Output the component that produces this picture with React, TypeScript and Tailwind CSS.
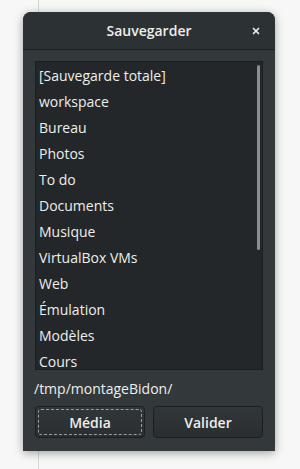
import { X } from "lucide-react";

const items = [
  "[Sauvegarde totale]",
  "workspace",
  "Bureau",
  "Photos",
  "To do",
  "Documents",
  "Musique",
  "VirtualBox VMs",
  "Web",
  "Émulation",
  "Modèles",
  "Cours",
];

const App = () => {
  return (
    <div
      className="relative w-[300px] h-[469px] overflow-hidden bg-[#f7f7f7] pt-[12px] pl-[23px]"
      style={{ fontFamily: '"Open Sans", "Noto Sans", sans-serif' }}
    >
      {/* background line behind the window */}
      <div className="absolute left-[38px] top-0 h-full w-px bg-[#d6d6d6]" />

      <div className="relative w-[252px] h-[439px] flex flex-col rounded-t-[8px] bg-[#33393b] shadow-[0_2px_10px_rgba(0,0,0,0.35)]">
        <div className="h-[38px] shrink-0 flex items-center justify-center relative rounded-t-[8px] bg-[#2c3133] border-b border-[#1b1f20]">
          <span className="text-[14px] font-semibold text-[#eeeeec]">Sauvegarder</span>
          <button className="absolute right-[14px] top-[14px] text-[#eeeeec]">
            <X size={10} strokeWidth={4} />
          </button>
        </div>

        <div className="flex-1 flex flex-col px-[12px] pt-[11px] pb-[12px]">
          <div className="relative h-[309px] overflow-hidden bg-[#232729] border border-[#1c1f20]">
            <div className="flex flex-col">
              {items.map((item, index) => (
                <div
                  key={index}
                  className="h-[26px] shrink-0 flex items-center pl-[3px] text-[14px] text-[#eeeeec]"
                >
                  {item}
                </div>
              ))}
            </div>
            <div className="absolute right-[2px] top-[3px] w-[3px] h-[185px] rounded-full bg-[#8b8e8f]" />
          </div>

          <div className="h-[36px] flex items-center text-[14px] text-[#eeeeec] -ml-[1px]">
            /tmp/montageBidon/
          </div>

          <div className="flex gap-[8px]">
            <button className="w-[110px] h-[32px] rounded-[4px] border border-[#1c1f1f] bg-gradient-to-b from-[#30363a] to-[#2a2e30] p-[2px]">
              <div className="w-full h-full flex items-center justify-center rounded-[3px] border border-dashed border-[#9a9c9d] text-[14px] font-semibold text-[#eeeeec]">
                Média
              </div>
            </button>
            <button className="flex-1 h-[32px] rounded-[4px] border border-[#1c1f1f] bg-gradient-to-b from-[#30363a] to-[#2a2e30] flex items-center justify-center text-[14px] font-semibold text-[#eeeeec]">
              Valider
            </button>
          </div>
        </div>
      </div>
    </div>
  );
};

export default App;
